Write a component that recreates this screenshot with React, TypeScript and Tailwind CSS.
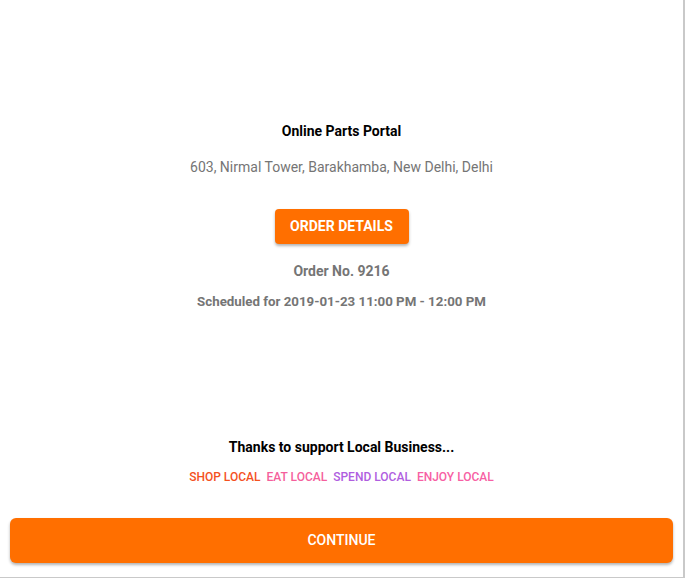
export default function App() {
  return (
    <div className="w-[685px] h-[580px] bg-white" style={{ fontFamily: "Roboto, 'Noto Sans', sans-serif" }}>
      <div className="w-[685px] h-[578px] border-r-2 border-b border-[#c9c9c9] flex flex-col">
        <div className="flex flex-col items-center pt-[122px]">
          <div className="text-[14px] leading-[18px] font-bold text-black">Online Parts Portal</div>
          <div className="mt-[18px] text-[14px] leading-[18px] text-[#757575]">603, Nirmal Tower, Barakhamba, New Delhi, Delhi</div>
          <button className="mt-[33px] h-[35px] w-[134px] rounded-[4px] bg-[#ff6f00] text-white text-[14px] font-bold shadow-[0_2px_3px_rgba(0,0,0,0.3)]">ORDER DETAILS</button>
          <div className="mt-[18px] text-[14px] leading-[18px] font-bold text-[#757575]">Order No. 9216</div>
          <div className="mt-[13px] text-[13.3px] leading-[18px] font-bold text-[#757575]">Scheduled for 2019-01-23 11:00 PM - 12:00 PM</div>
        </div>
        <div className="flex flex-col items-center mt-[127px]">
          <div className="text-[14px] leading-[18px] font-bold text-black">Thanks to support Local Business...</div>
          <div className="mt-[13px] flex gap-[6px] text-[12px] leading-[16px] font-medium">
            <span className="text-[#f4511e]">SHOP LOCAL</span>
            <span className="text-[#f55f9c]">EAT LOCAL</span>
            <span className="text-[#b05ee0]">SPEND LOCAL</span>
            <span className="text-[#f75fa4]">ENJOY LOCAL</span>
          </div>
        </div>
        <div className="px-[10px] mt-[33px]">
          <button className="w-full h-[45px] rounded-[6px] bg-[#ff6f00] text-white text-[14px] font-medium shadow-[0_2px_3px_rgba(0,0,0,0.3)]">CONTINUE</button>
        </div>
      </div>
    </div>
  );
}
